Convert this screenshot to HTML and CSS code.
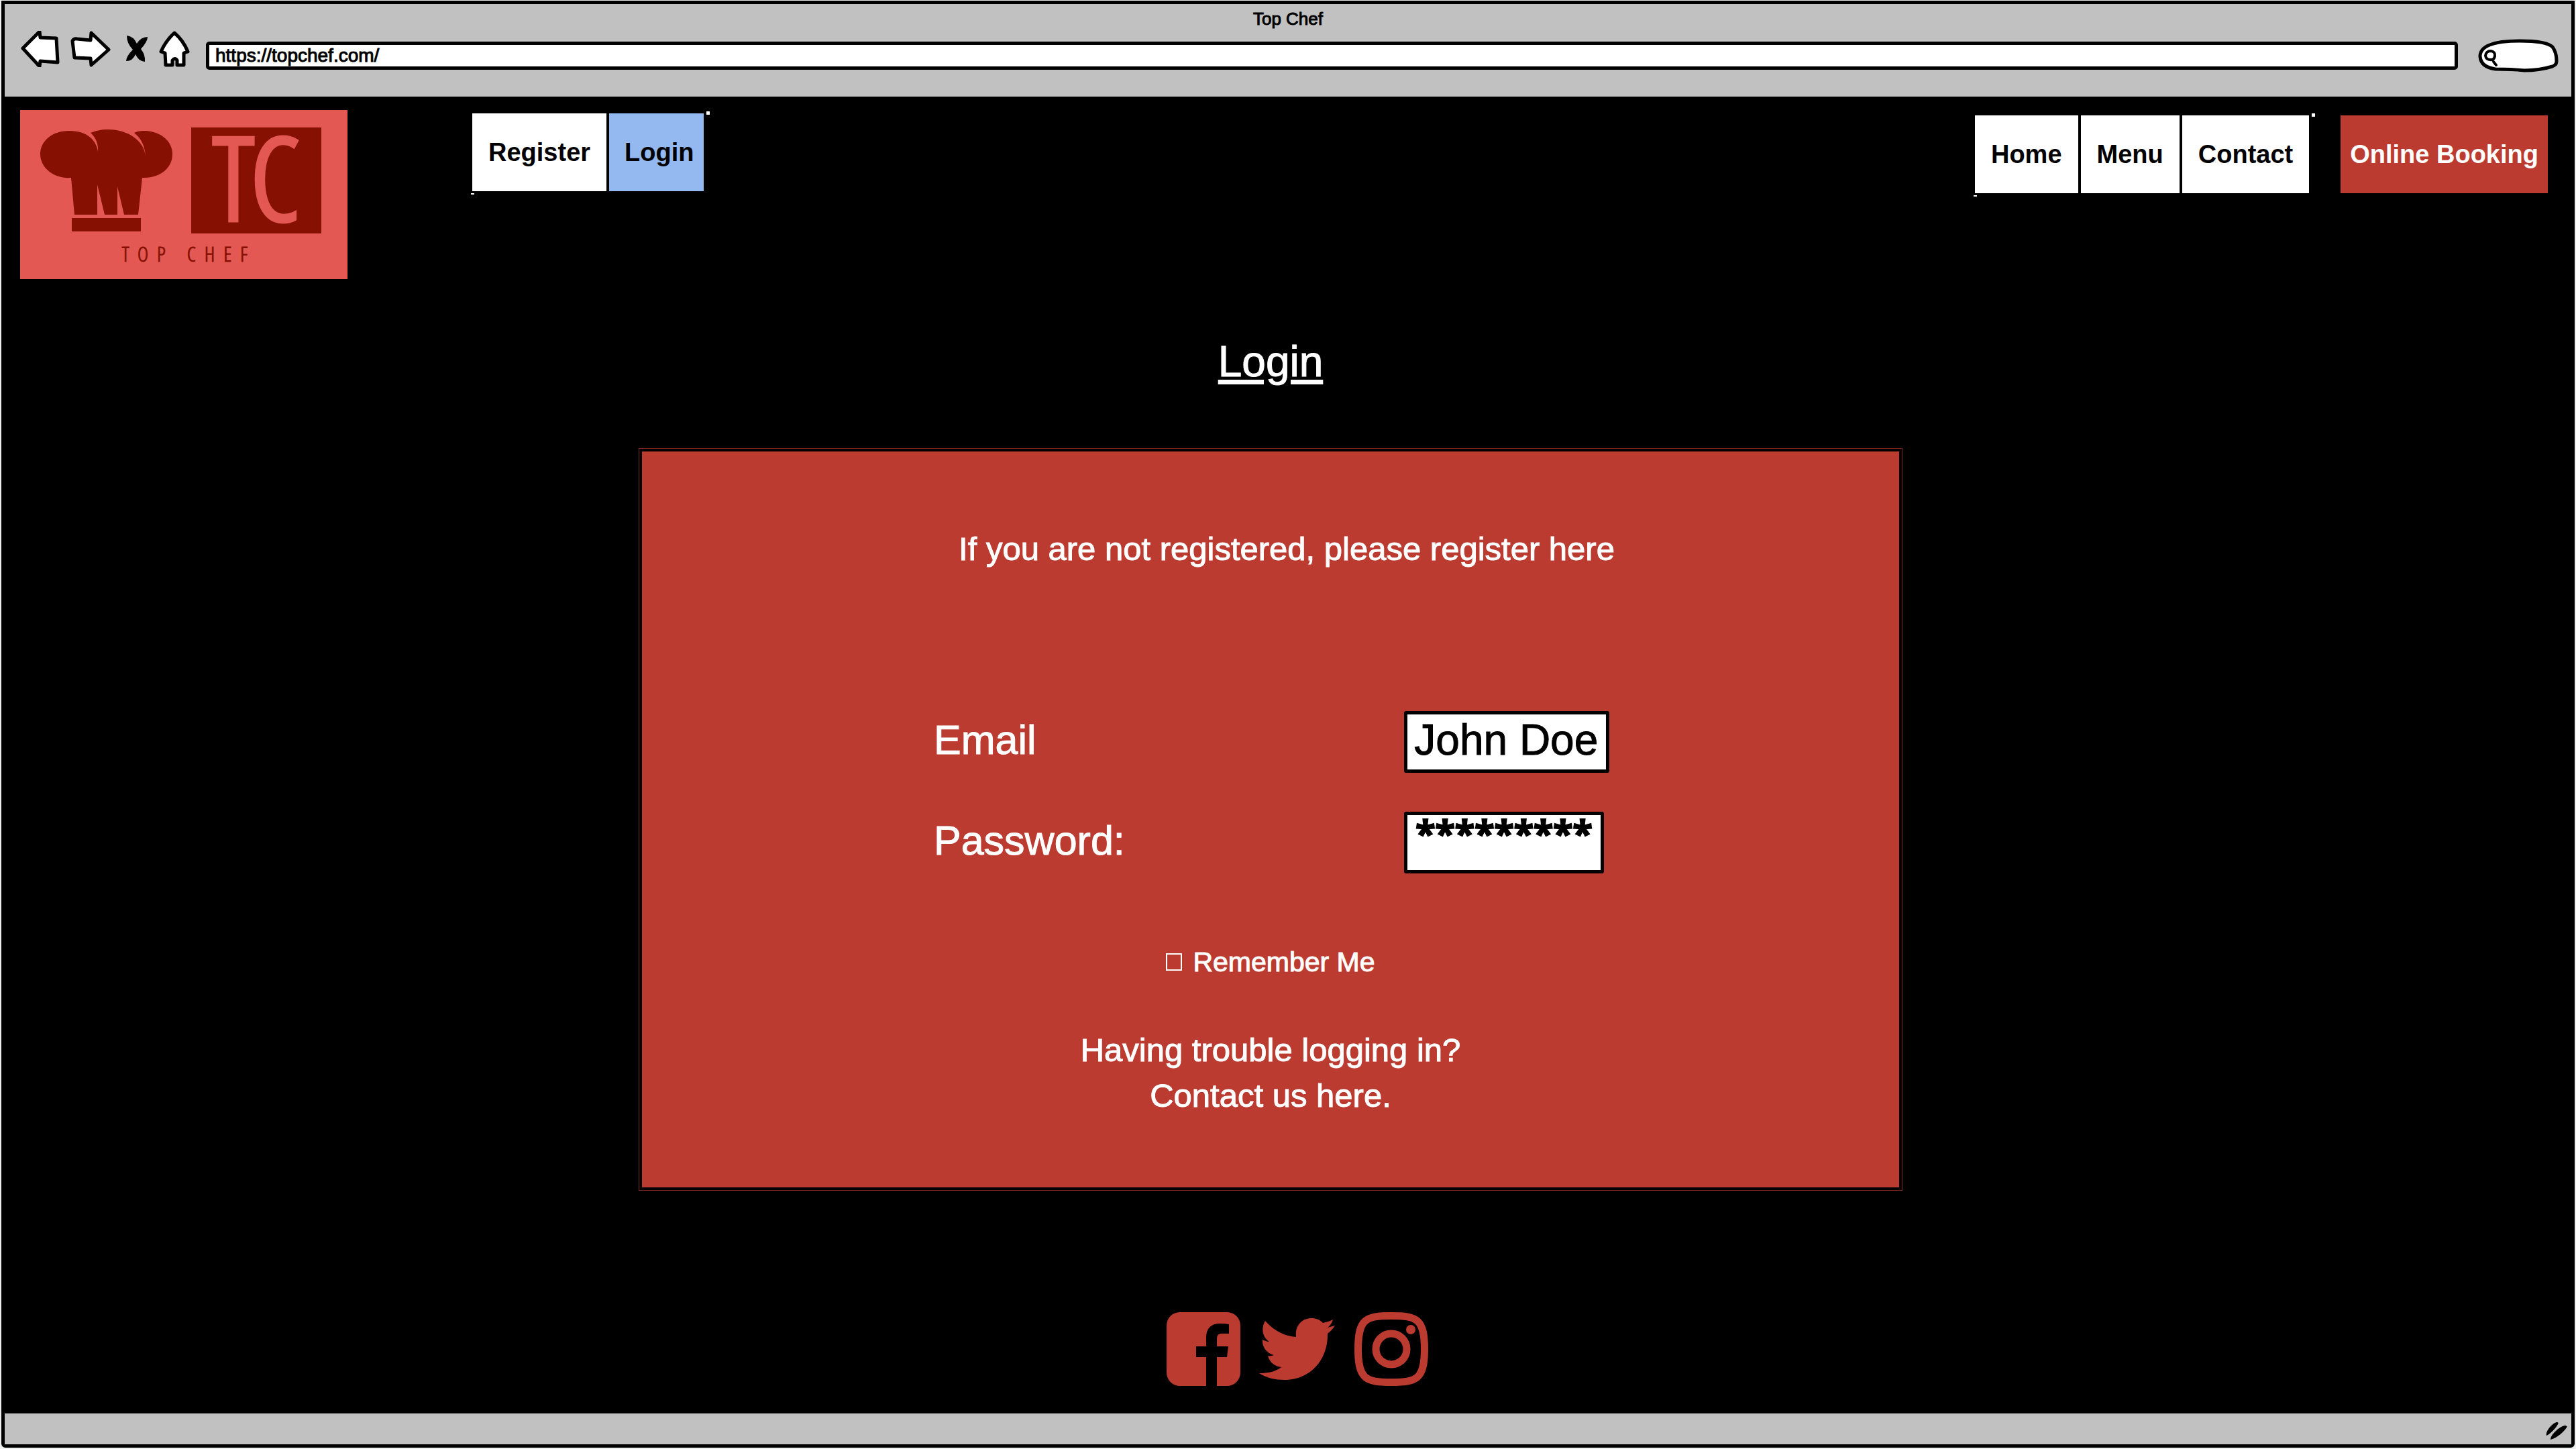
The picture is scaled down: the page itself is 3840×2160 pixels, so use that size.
FILE: index.html
```html
<!DOCTYPE html>
<html lang="en">
<head>
<meta charset="utf-8">
<title>Top Chef</title>
<link rel="stylesheet" href="styles.css">
</head>
<body>
<div class="window">
  <header class="chrome">
    <p class="chrome-title">Top Chef</p>
    <div class="chrome-bar">
      <div class="chrome-tools">
        <button class="tool" aria-label="Back"><svg width="58" height="54" viewBox="0 0 58 54"><path d="M3 29 28 4l1 9 24 1 2 36-26-2-1 8z" fill="#fff" stroke="#000" stroke-width="5" stroke-linejoin="round" transform="translate(0 -3)"/></svg></button>
        <button class="tool" aria-label="Forward"><svg width="60" height="54" viewBox="0 0 60 54"><path d="M3 15q2-4 7-3l20 2 1-11 26 25-26 23-1-10-24-1z" fill="#fff" stroke="#000" stroke-width="5" stroke-linejoin="round"/></svg></button>
        <button class="tool tool-stop" aria-label="Stop"><svg width="34" height="40" viewBox="0 0 34 40"><path d="M2 0q10 1 15 12Q23 2 33 2q0 7-10 18 7 9 6 19-10-1-14-11Q11 38 1 38q0-7 10-17Q2 12 2 0z"/></svg></button>
        <button class="tool" aria-label="Home"><svg width="46" height="56" viewBox="0 0 46 56"><path d="M23 4Q36 15 43 32l-6 2v18H27v-7q-3-5-7 0v7H10L9 34l-6-2Q10 16 23 4z" fill="#fff" stroke="#000" stroke-width="5" stroke-linejoin="round"/></svg></button>
      </div>
      <input class="address" type="text" aria-label="Address" value="https://topchef.com/">
      <label class="search">
        <svg class="search-shape" width="120" height="50" viewBox="0 0 120 50"><path d="M26 45Q4 42 3 26 3 3 62 3q40 0 49 9 6 8 6 21 0 6-6 8-20 6-42 6-20-2-43-2z" fill="#fff" stroke="#000" stroke-width="5"/><path d="M23 34l4 5M21 31q-9 1-10-6 1-7 8-7 7 1 6 8-1 4-4 5z" fill="none" stroke="#000" stroke-width="4" stroke-linecap="round"/></svg>
        <input class="search-input" type="search" aria-label="Search">
      </label>
    </div>
  </header>

  <div class="site">
    <div class="site-header">
      <a class="logo" href="#" aria-label="Top Chef">
        <svg viewBox="0 0 488 252">
          <path d="M76 101C48 103 30 84 30 66c0-20 18-35 43-35 28 0 41 15 43 31 1-12-4-22-11-28 8-3 15-5 26-5 30 0 54 17 56 40-1-16-7-27-17-35 4-2 9-3 14-3 24 0 43 14 43 35 0 19-17 36-45 35l-6 55h-21l-10-42v42h-19l-11-45v45H81z" fill="#861002"/>
          <path d="M77 161h103v20H77zM255 26h194v158H255z" fill="#861002"/>
          <text class="logo-mark" x="352" y="164" text-anchor="middle">TC</text>
          <text class="logo-name" x="252" y="226" text-anchor="middle">TOP CHEF</text>
        </svg>
      </a>
      <nav class="segments segments-account" aria-label="Account">
        <a class="segment" href="#">Register</a>
        <a class="segment segment-current" href="#" aria-current="page">Login</a>
      </nav>
      <div class="header-end">
        <nav class="segments" aria-label="Main">
          <a class="segment" href="#">Home</a>
          <a class="segment" href="#">Menu</a>
          <a class="segment" href="#">Contact</a>
        </nav>
        <button class="booking" type="button">Online Booking</button>
      </div>
    </div>

    <main class="main">
      <h1 class="title">Login</h1>
      <form class="panel">
        <div class="credentials">
          <p class="message">If you are not registered, please register here</p>
          <div class="fields">
            <label class="field-label" for="email">Email</label>
            <input class="field field-email" id="email" type="text" value="John Doe">
            <label class="field-label" for="password">Password:</label>
            <input class="field field-password" id="password" type="text" autocomplete="off" value="*********">
          </div>
        </div>
        <label class="remember"><input class="remember-box" type="checkbox">Remember Me</label>
        <p class="message">Having trouble logging in?<br>Contact us here.</p>
      </form>
    </main>

    <nav class="social" aria-label="Social media">
      <a class="social-link" href="#" aria-label="Facebook"><svg width="110" height="110" viewBox="0 0 110 110"><path d="M20 0h70a20 20 0 0 1 20 20v70a20 20 0 0 1-20 20H75V67h15l2-16H75V39q0-7 7-7h11V18q-6-1-13-1-21 0-21 21v13H44v16h15v43H20A20 20 0 0 1 0 90V20A20 20 0 0 1 20 0z"/></svg></a>
      <a class="social-link" href="#" aria-label="Twitter"><svg width="114" height="110" viewBox="0 0 114 110"><path d="M9 13c13 15 30 23 46 24C53 20 64 9 78 9c7 0 12 2 17 7 6-1 11-3 15-5-1 4-4 9-8 12l11-3c-3 5-7 9-11 12 1 40-27 69-64 69-14 0-27-3-38-10 13 0 24-2 33-9-10-1-18-8-20-17 3 1 6 0 9-1C11 61 4 52 5 41c3 1 6 3 10 3C4 37 3 23 9 13z"/></svg></a>
      <a class="social-link" href="#" aria-label="Instagram"><svg width="110" height="110" viewBox="0 0 110 110"><path d="M55 5.500C17 5.500 5.500 10 5.500 55S17 104.500 55 104.500 104.500 100 104.500 55 93 5.500 55 5.500z" fill="none" stroke="#bc3b31" stroke-width="11"/><circle cx="55" cy="55" r="23" fill="none" stroke="#bc3b31" stroke-width="11"/><circle cx="84" cy="26" r="7"/></svg></a>
    </nav>
  </div>

  <footer class="status">
    <svg width="34" height="28" viewBox="0 0 34 28"><path d="M2 21C0 15 10 3 17 1q4 0 2 3C15 11 8 18 2 21zM8 27C8 19 22 7 30 6q4 1 2 3C27 17 16 25 8 27z"/></svg>
  </footer>
</div>
</body>
</html>
```
FILE: styles.css
```css
:root {
  --red: #bc3b31;
  --grey: #c1c1c1;
}

* {
  box-sizing: border-box;
}

body {
  margin: 0;
  padding: 1px 2px 2px;
  background: #eef0ef;
  color: #000;
  font-family: "Liberation Sans", Arial, sans-serif;
}

h1,
p {
  margin: 0;
}

button,
input {
  margin: 0;
  font: inherit;
  color: inherit;
}

svg {
  display: block;
}

a {
  color: inherit;
  text-decoration: none;
}

.window {
  display: flex;
  flex-direction: column;
  min-height: calc(100vh - 3px);
  border: 5px solid #000;
  border-radius: 0 0 6px 6px;
  background: #000;
}

/* Browser chrome */
.chrome {
  height: 138px;
  padding-top: 7px;
  background: var(--grey);
  font-size: 26px;
  -webkit-text-stroke: 1px currentColor;
}

.chrome-title {
  line-height: 30px;
  text-align: center;
}

.chrome-bar {
  display: flex;
  align-items: center;
  height: 60px;
  padding: 0 19px 0 24px;
}

.chrome-tools {
  display: flex;
  align-items: center;
  flex: none;
  gap: 16px;
  width: 276px;
  height: 60px;
}

.tool {
  padding: 0;
  border: 0;
  background: none;
}

.tool-stop {
  margin-left: 6px;
}

.address {
  flex: 1;
  min-width: 0;
  height: 42px;
  margin: 20px 30px 0 0;
  padding: 0 9px;
  border: 5px solid #000;
  border-radius: 5px;
  background: #fff;
  font-size: 28px;
  -webkit-text-stroke: inherit;
}

.search {
  position: relative;
  flex: none;
  margin-top: 20px;
}

.search-input {
  position: absolute;
  inset: 8px 8px 8px 34px;
  width: 78px;
  border: 0;
  background: none;
}

/* Page header */
.site {
  display: flex;
  flex-direction: column;
  flex: 1;
  padding-top: 20px;
  color: #fff;
}

.site-header {
  display: flex;
  align-items: flex-start;
  padding: 0 35px 0 23px;
  color: #000;
}

.logo {
  flex: none;
  width: 488px;
  margin-right: 186px;
  background: #e35853;
}

.logo-mark,
.logo-name {
  font-family: "Open Sans Condensed Light", "Open Sans Condensed", "Liberation Sans Narrow", "Liberation Sans", sans-serif;
  font-weight: 300;
}

.logo-mark {
  fill: #e35853;
  stroke: #e35853;
  stroke-width: 7px;
  font-size: 170px;
}

.logo-name {
  fill: #861002;
  stroke: #861002;
  stroke-width: 1px;
  font-size: 31px;
  letter-spacing: 13px;
}

.segments {
  position: relative;
  display: flex;
  gap: 4px;
}

.segments::before,
.segments::after {
  content: "";
  position: absolute;
  width: 5px;
  background: #fff;
}

.segments::before {
  right: -9px;
  top: -3px;
  height: 5px;
}

.segments::after {
  left: -2px;
  bottom: -5px;
  height: 2px;
}

.segments-account {
  margin-top: 5px;
}

.segment,
.booking {
  padding: 0 24px;
  background: #fff;
  font-size: 38px;
  font-weight: 700;
  line-height: 116px;
}

.segment-current {
  padding: 0 15px 0 23px;
  background: #94b9f1;
}

.header-end {
  display: flex;
  gap: 47px;
  margin: 8px 0 0 auto;
}

.booking {
  padding: 0 14px;
  border: 0;
  background: var(--red);
  color: #fff;
}

/* Login */
.main {
  display: flex;
  flex-direction: column;
  align-items: center;
  padding: 83px 52px 0 0;
  -webkit-text-stroke: 1px currentColor;
}

.title {
  padding: 0 5px;
  font-size: 64px;
  font-weight: 400;
  line-height: 80px;
  text-decoration: underline;
  text-decoration-thickness: 7px;
  text-underline-offset: 5px;
}

.panel {
  display: flex;
  flex-direction: column;
  align-items: center;
  width: 49.65%;
  margin-top: 94px;
  padding: 111px 0 103px;
  background: var(--red);
  outline: 1px solid #7d2821;
  outline-offset: 4px;
}

.credentials {
  padding-left: 48px;
}

.message {
  font-size: 49px;
  line-height: 68px;
  text-align: center;
}

.fields {
  display: grid;
  grid-template-columns: 2fr 1fr;
  row-gap: 58px;
  align-items: center;
  width: 1052px;
  margin-top: 208px;
}

.field-label {
  padding-bottom: 6px;
  font-size: 61px;
}

.field {
  height: 92px;
  border: 5px solid #000;
  border-radius: 3px;
  background: #fff;
  color: #000;
  -webkit-text-stroke: inherit;
}

.field-email {
  width: 306px;
  padding: 0 8px 6px 10px;
  font-size: 64px;
}

.field-password {
  width: 298px;
  padding: 0 8px 30px 12px;
  font-family: "Noto Sans", sans-serif;
  font-size: 54px;
  line-height: 50px;
  font-weight: 700;
  -webkit-text-stroke: 2px currentColor;
}

.remember {
  display: flex;
  align-items: center;
  gap: 16px;
  margin: 108px 0 73px;
  font-size: 41px;
  line-height: 48px;
}

.remember-box {
  appearance: none;
  width: 24px;
  height: 26px;
  border: 2px solid #fff;
}

/* Social links */
.social {
  display: flex;
  justify-content: center;
  gap: 28px;
  padding: 186px 0 0 28px;
  fill: var(--red);
}

/* Status bar */
.status {
  display: flex;
  justify-content: flex-end;
  align-items: center;
  height: 51px;
  padding: 6px 5px 0 0;
  border-top: 5px solid #000;
  background: var(--grey);
}
```
